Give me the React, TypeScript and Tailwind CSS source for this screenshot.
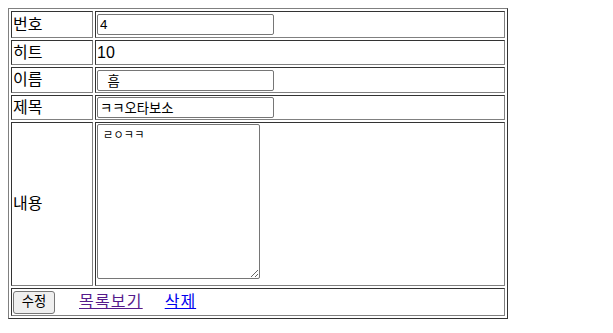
import React from "react";

const cell =
  "border border-solid border-t-[#333] border-l-[#333] border-b-[#808080] border-r-[#808080] p-[1px] align-middle";

export default function App() {
  return (
    <div
      className="p-[8px] bg-white text-black text-[16px] leading-[18px]"
      style={{ fontFamily: '"Liberation Sans", "Noto Sans CJK KR", sans-serif' }}
    >
      <table className="w-[500px] border-separate border-spacing-[2px] border border-solid border-t-[#808080] border-l-[#808080] border-b-[#333] border-r-[#333]">
        <tbody>
          <tr className="h-[27px]">
            <td className={`${cell} w-[82px]`}>번호</td>
            <td className={cell}>
              <input
                readOnly
                defaultValue="4"
                className="block w-[177px] h-[21px] border border-[#767676] rounded-[2px] px-[2px] py-[1px] text-[13.33px] leading-[16px] outline-none"
              />
            </td>
          </tr>
          <tr className="h-[25px]">
            <td className={cell}>히트</td>
            <td className={cell}>10</td>
          </tr>
          <tr className="h-[26px]">
            <td className={cell}>이름</td>
            <td className={cell}>
              <input
                readOnly
                defaultValue={"\u00a0\u00a0흠"}
                className="block w-[177px] h-[21px] border border-[#767676] rounded-[2px] px-[2px] py-[1px] text-[13.33px] leading-[16px] outline-none"
              />
            </td>
          </tr>
          <tr className="h-[25px]">
            <td className={cell}>제목</td>
            <td className={cell}>
              <input
                readOnly
                defaultValue="ㅋㅋ오타보소"
                className="block w-[177px] h-[21px] border border-[#767676] rounded-[2px] px-[2px] py-[1px] text-[13.33px] leading-[16px] outline-none"
              />
            </td>
          </tr>
          <tr className="h-[164px]">
            <td className={cell}>내용</td>
            <td className="border border-solid border-t-[#333] border-l-[#333] border-b-[#808080] border-r-[#808080] p-[1px] align-top">
              <textarea
                readOnly
                defaultValue="ㄹㅇㅋㅋ"
                className="block w-[163px] h-[155px] border border-[#767676] rounded-[2px] pl-[5px] pr-[2px] pt-[4px] text-[11px] leading-[13px] tracking-[0.3px] outline-none resize"
              />
            </td>
          </tr>
          <tr className="h-[28px]">
            <td className={cell} colSpan={2}>
              <div className="flex items-center">
                <button className="w-[42px] h-[23px] bg-[#efefef] border border-[#767676] rounded-[3px] text-[13.33px] leading-[16px] flex items-center justify-center">
                  수정
                </button>
                <a href="#" className="ml-[24px] underline tracking-[1.2px] text-[#551a8b]">
                  목록보기
                </a>
                <a href="#" className="ml-[22px] underline tracking-[1px] text-[#0000ee]">
                  삭제
                </a>
              </div>
            </td>
          </tr>
        </tbody>
      </table>
    </div>
  );
}
